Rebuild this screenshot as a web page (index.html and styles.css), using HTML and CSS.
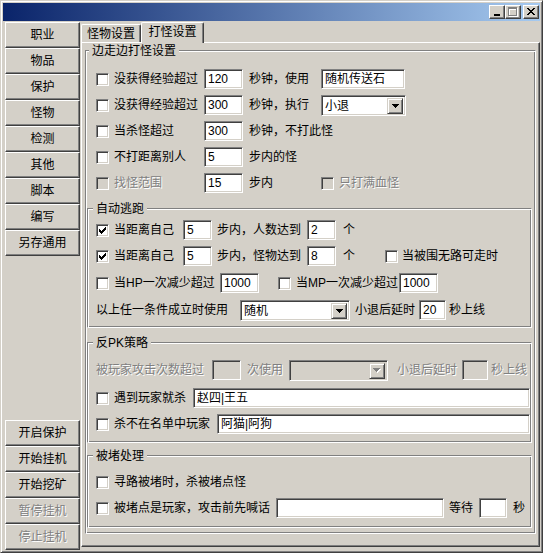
FILE: index.html
```html
<!DOCTYPE html>
<html lang="zh-CN">
<head>
<meta charset="utf-8">
<title>打怪设置</title>
<link rel="stylesheet" href="styles.css">
</head>
<body>
<div class="window">
  <div class="titlebar">
    <span class="capbtn"><svg width="14" height="12" viewBox="0 0 14 12"><rect x="4" y="8" width="6" height="2" fill="#000"/></svg></span>
    <span class="capbtn"><svg width="14" height="12" viewBox="0 0 14 12"><path d="M3 2h9v2h-9z M3 4h1v7h-1z M11 4h1v7h-1z M3 10h9v1h-9z" fill="#fff"/><path d="M2 1h9v2h-9z M2 3h1v7h-1z M10 3h1v7h-1z M2 9h9v1h-9z" fill="#808080"/></svg></span>
    <span class="capbtn close"><svg width="14" height="12" viewBox="0 0 14 12"><path d="M3 2h2v1h-2z M9 2h2v1h-2z M4 3h2v1h-2z M8 3h2v1h-2z M5 4h4v1h-4z M6 5h2v1h-2z M5 6h4v1h-4z M4 7h2v1h-2z M8 7h2v1h-2z M3 8h2v1h-2z M9 8h2v1h-2z" fill="#000"/></svg></span>
  </div>
  <div class="client">
    <div class="sidebar">
      <div class="btngroup">
        <div class="btn">职业</div>
        <div class="btn">物品</div>
        <div class="btn">保护</div>
        <div class="btn">怪物</div>
        <div class="btn">检测</div>
        <div class="btn">其他</div>
        <div class="btn">脚本</div>
        <div class="btn">编写</div>
        <div class="btn">另存通用</div>
      </div>
      <div class="btngroup">
        <div class="btn">开启保护</div>
        <div class="btn">开始挂机</div>
        <div class="btn">开始挖矿</div>
        <div class="btn dis">暂停挂机</div>
        <div class="btn dis">停止挂机</div>
      </div>
    </div>
    <div class="tabs">
      <div class="tabstrip">
        <div class="tab tab1">怪物设置</div>
        <div class="tab sel">打怪设置</div>
      </div>
      <div class="panel">
        <div class="gb outer">
          <div class="gb-title">边走边打怪设置</div>
          <div class="sec1">
            <div class="row">
              <span class="cb"></span><span class="t w90">没获得经验超过</span><span class="edit w39">120</span><span class="t c2">秒钟，使用</span><span class="edit w84">随机传送石</span>
            </div>
            <div class="row">
              <span class="cb"></span><span class="t w90">没获得经验超过</span><span class="edit w39">300</span><span class="t c2">秒钟，执行</span><span class="combo w85"><span class="combo-text">小退</span><span class="drop"><svg width="7" height="4" viewBox="0 0 7 4"><path d="M0 0h7v1h-7z M1 1h5v1h-5z M2 2h3v1h-3z M3 3h1v1h-1z" fill="#000"/></svg></span></span>
            </div>
            <div class="row">
              <span class="cb"></span><span class="t w90">当杀怪超过</span><span class="edit w39">300</span><span class="t ml6">秒钟，不打此怪</span>
            </div>
            <div class="row">
              <span class="cb"></span><span class="t w90">不打距离别人</span><span class="edit w39">5</span><span class="t ml6">步内的怪</span>
            </div>
            <div class="row">
              <span class="cb dis"></span><span class="t w90 dis">找怪范围</span><span class="edit w39">15</span><span class="t c2">步内</span><span class="cb dis"></span><span class="t dis">只打满血怪</span>
            </div>
          </div>

          <div class="gb inner escape">
            <div class="gb-title">自动逃跑</div>
            <div class="rows pt1">
              <div class="row">
                <span class="cb"><svg width="7" height="7" viewBox="0 0 7 7"><path d="M6 0h1v1h-1z M5 1h2v1h-2z M0 2h1v1h-1z M4 2h3v1h-3z M0 3h2v1h-2z M3 3h3v1h-3z M0 4h5v1h-5z M1 5h3v1h-3z M2 6h1v1h-1z" fill="#000"/></svg></span><span class="t w69">当距离自己</span><span class="edit w29">5</span><span class="t ml5 w84">步内，人数达到</span><span class="edit ml6 w29">2</span><span class="t ml7 w12">个</span>
              </div>
              <div class="row">
                <span class="cb"><svg width="7" height="7" viewBox="0 0 7 7"><path d="M6 0h1v1h-1z M5 1h2v1h-2z M0 2h1v1h-1z M4 2h3v1h-3z M0 3h2v1h-2z M3 3h3v1h-3z M0 4h5v1h-5z M1 5h3v1h-3z M2 6h1v1h-1z" fill="#000"/></svg></span><span class="t w69">当距离自己</span><span class="edit w29">5</span><span class="t ml5 w84">步内，怪物达到</span><span class="edit ml6 w29">8</span><span class="t ml7 w12">个</span><span class="cb ml30 mr4"></span><span class="t">当被围无路可走时</span>
              </div>
              <div class="row h28">
                <span class="cb"></span><span class="t w106">当HP一次减少超过</span><span class="edit w39">1000</span><span class="cb ml19"></span><span class="t w103">当MP一次减少超过</span><span class="edit w39">1000</span>
              </div>
              <div class="row">
                <span class="t w144">以上任一条件成立时使用</span><span class="combo w110"><span class="combo-text">随机</span><span class="drop"><svg width="7" height="4" viewBox="0 0 7 4"><path d="M0 0h7v1h-7z M1 1h5v1h-5z M2 2h3v1h-3z M3 3h1v1h-1z" fill="#000"/></svg></span></span><span class="t ml5">小退后延时</span><span class="edit ml4 w27">20</span><span class="t ml3">秒上线</span>
              </div>
            </div>
          </div>

          <div class="gb inner pk">
            <div class="gb-title">反PK策略</div>
            <div class="rows">
              <div class="row mt7">
                <span class="t dis w116">被玩家攻击次数超过</span><span class="edit dis w29"></span><span class="t dis ml6">次使用</span><span class="combo dis ml6 w99"><span class="combo-text"></span><span class="drop"><svg width="8" height="5" viewBox="0 0 8 5"><path d="M1 1h7v1h-7z M2 2h5v1h-5z M3 3h3v1h-3z M4 4h1v1h-1z" fill="#fff"/><path d="M0 0h7v1h-7z M1 1h5v1h-5z M2 2h3v1h-3z M3 3h1v1h-1z" fill="#808080"/></svg></span></span><span class="t dis ml9">小退后延时</span><span class="edit dis ml5 w26"></span><span class="t dis ml3">秒上线</span>
              </div>
              <div class="row mt2">
                <span class="cb"></span><span class="t w79">遇到玩家就杀</span><span class="edit w337">赵四|王五</span>
              </div>
              <div class="row">
                <span class="cb"></span><span class="t w103">杀不在名单中玩家</span><span class="edit w313">阿猫|阿狗</span>
              </div>
            </div>
          </div>

          <div class="gb inner block">
            <div class="gb-title">被堵处理</div>
            <div class="rows">
              <div class="row mt6">
                <span class="cb"></span><span class="t">寻路被堵时，杀被堵点怪</span>
              </div>
              <div class="row">
                <span class="cb"></span><span class="t w162">被堵点是玩家，攻击前先喊话</span><span class="edit w168"></span><span class="t ml5">等待</span><span class="edit ml6 w28"></span><span class="t ml6">秒</span>
              </div>
            </div>
          </div>
        </div>
      </div>
    </div>
  </div>
</div>
</body>
</html>
```

FILE: styles.css
```css
* { box-sizing: border-box; }
html, body { margin: 0; padding: 0; }
body {
  background: #d4d0c8;
  color: #000;
  font-family: "Liberation Sans", "Noto Sans CJK SC", sans-serif;
  font-size: 12px;
  line-height: 16px;
}
svg { display: block; }

/* window frame */
.window {
  width: 543px;
  height: 553px;
  background: #d4d0c8;
  border: 1px solid;
  border-color: #d4d0c8 #404040 #404040 #d4d0c8;
  box-shadow: inset 1px 1px #fff, inset -1px -1px #808080;
  padding: 2px;
  display: flex;
  flex-direction: column;
}
.titlebar {
  height: 18px;
  flex: none;
  background: linear-gradient(to right, #0a246a, #a6caf0);
  display: flex;
  align-items: center;
  justify-content: flex-end;
  padding-right: 1px;
}
.capbtn {
  width: 16px;
  height: 14px;
  background: #d4d0c8;
  border: 1px solid;
  border-color: #fff #404040 #404040 #fff;
  box-shadow: inset -1px -1px #808080;
}
.capbtn.close { margin-left: 2px; }

.client {
  flex: 1;
  display: flex;
  min-height: 0;
}

/* sidebar */
.sidebar {
  width: 78px;
  flex: none;
  padding: 1px 0 0 2px;
  display: flex;
  flex-direction: column;
  justify-content: space-between;
}
.btn {
  width: 75px;
  height: 26px;
  border: 1px solid;
  border-color: #fff #404040 #404040 #fff;
  box-shadow: inset -1px -1px #808080;
  display: flex;
  align-items: center;
  justify-content: center;
  white-space: nowrap;
}
.btn.dis { color: #808080; text-shadow: 1px 1px 0 #fff; }

/* tabs */
.tabs {
  flex: 1;
  display: flex;
  flex-direction: column;
  padding-bottom: 3px;
  min-width: 0;
}
.tabstrip {
  height: 21px;
  flex: none;
  display: flex;
  align-items: flex-end;
}
.tab {
  height: 18px;
  background: #d4d0c8;
  border-top: 1px solid #fff;
  border-left: 1px solid #fff;
  border-right: 1px solid #404040;
  box-shadow: inset -1px 0 #808080;
  border-radius: 2px 2px 0 0;
  display: flex;
  align-items: center;
  justify-content: center;
  white-space: nowrap;
}
.tab1 { width: 60px; }
.tab.sel {
  width: 63px;
  height: 21px;
  margin-bottom: -1px;
  padding-bottom: 2px;
  position: relative;
  z-index: 1;
}
.panel {
  flex: 1;
  border: 1px solid;
  border-color: #fff #404040 #404040 #fff;
  box-shadow: inset -1px -1px #808080;
  padding: 7px 3px 0 3px;
}

/* group boxes */
.gb {
  border: 1px solid;
  border-color: #808080 #fff #fff #808080;
  box-shadow: inset 1px 1px #fff, inset -1px -1px #808080;
}
.gb-title {
  width: fit-content;
  height: 13px;
  line-height: 13px;
  margin: -6px 0 0 5px;
  padding: 0 3px;
  background: #d4d0c8;
  white-space: nowrap;
}
.outer { padding-bottom: 5px; }
.outer > .gb-title { margin-left: 3px; }
.sec1 { padding: 8px 0 0 10px; }
.inner { margin: 0 3px 0 1px; }
.rows { padding-left: 8px; }
.escape { margin-top: 12px; padding-bottom: 4px; }
.pk { margin-top: 14px; padding-bottom: 5px; }
.block { margin-top: 12px; padding-bottom: 6px; }
.pt1 { padding-top: 1px; }

/* rows */
.row {
  display: flex;
  align-items: center;
  height: 26px;
  white-space: nowrap;
}
.row.h28 { height: 28px; }
.t { flex: none; }
.dis { color: #808080; text-shadow: 1px 1px 0 #fff; }

/* controls */
.cb {
  width: 13px;
  height: 13px;
  flex: none;
  border: 1px solid;
  border-color: #808080 #fff #fff #808080;
  box-shadow: inset 1px 1px #404040, inset -1px -1px #d4d0c8;
  background: #fff;
  padding: 2px;
  margin-right: 5px;
}
.cb.dis { background: #d4d0c8; }
.edit {
  height: 20px;
  flex: none;
  border: 1px solid;
  border-color: #808080 #fff #fff #808080;
  box-shadow: inset 1px 1px #404040, inset -1px -1px #d4d0c8;
  background: #fff;
  padding: 2px 2px 0 3px;
  line-height: 15px;
  overflow: hidden;
  text-shadow: none;
  color: #000;
}
.edit.dis { background: #d4d0c8; }
.combo {
  height: 21px;
  flex: none;
  display: flex;
  align-items: center;
  border: 1px solid;
  border-color: #808080 #fff #fff #808080;
  box-shadow: inset 1px 1px #404040, inset -1px -1px #d4d0c8;
  background: #fff;
  padding: 2px 2px 1px 2px;
}
.combo.dis { background: #d4d0c8; }
.combo-text { flex: 1; padding-left: 1px; overflow: hidden; }
.drop {
  width: 16px;
  height: 16px;
  flex: none;
  background: #d4d0c8;
  border: 1px solid;
  border-color: #d4d0c8 #404040 #404040 #d4d0c8;
  box-shadow: inset 1px 1px #fff, inset -1px -1px #808080;
  display: flex;
  align-items: center;
  justify-content: center;
}

/* widths & spacing */
.w12 { width: 12px; }
.w26 { width: 26px; }
.w27 { width: 27px; }
.w28 { width: 28px; }
.w29 { width: 29px; }
.w39 { width: 39px; }
.w69 { width: 69px; }
.w79 { width: 79px; }
.w84 { width: 84px; }
.w85 { width: 85px; }
.w90 { width: 90px; }
.w99 { width: 99px; }
.w103 { width: 103px; }
.w106 { width: 106px; }
.w110 { width: 110px; }
.w116 { width: 116px; }
.w144 { width: 144px; }
.w162 { width: 162px; }
.w168 { width: 168px; }
.w313 { width: 313px; }
.w337 { width: 337px; }
.c2 { margin-left: 6px; width: 72px; }
.ml3 { margin-left: 3px; }
.ml4 { margin-left: 4px; }
.ml5 { margin-left: 5px; }
.ml6 { margin-left: 6px; }
.ml7 { margin-left: 7px; }
.ml9 { margin-left: 9px; }
.ml19 { margin-left: 19px; }
.ml30 { margin-left: 30px; }
.mr4 { margin-right: 4px; }
.mt2 { margin-top: 2px; }
.mt6 { margin-top: 6px; }
.mt7 { margin-top: 7px; }
```
